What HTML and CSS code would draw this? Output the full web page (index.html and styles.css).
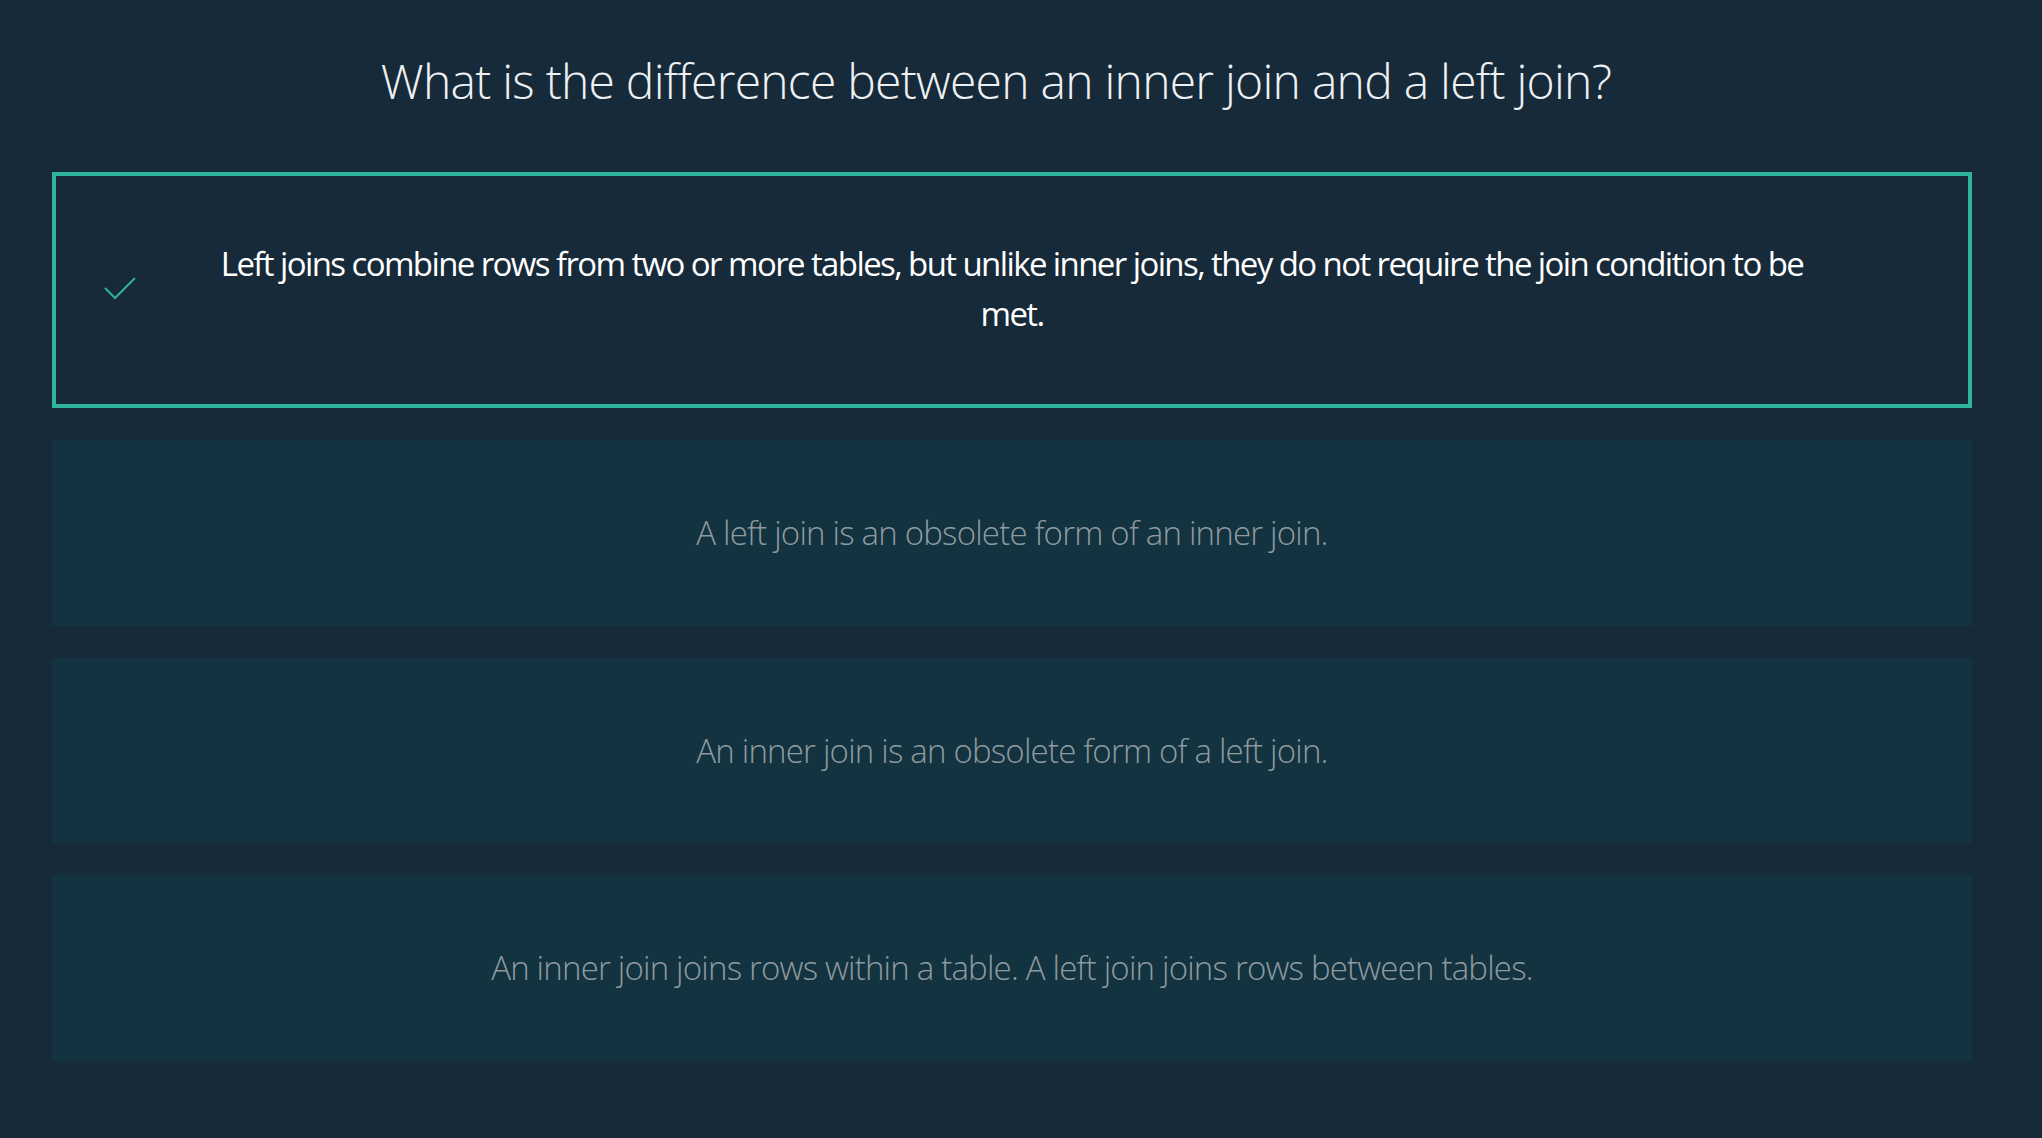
FILE: index.html
```html
<!DOCTYPE html>
<html lang="en">
<head>
<meta charset="utf-8">
<title>Quiz question</title>
<link rel="stylesheet" href="styles.css">
</head>
<body>
<main class="quiz">
  <h1 class="question">What is the difference between an inner join and a left join?</h1>
  <ul class="answers">
    <li class="answer answer--correct">
      <svg class="check" width="34" height="24" viewBox="0 0 34 24" aria-hidden="true"><polyline points="2,12 12,22 32,2" fill="none" stroke="#2fb39b" stroke-width="2"/></svg>
      <span class="answer-text">Left joins combine rows from two or more tables, but unlike inner joins, they do not require the join condition to be met.</span>
    </li>
    <li class="answer"><span class="answer-text">A left join is an obsolete form of an inner join.</span></li>
    <li class="answer"><span class="answer-text">An inner join is an obsolete form of a left join.</span></li>
    <li class="answer"><span class="answer-text">An inner join joins rows within a table. A left join joins rows between tables.</span></li>
  </ul>
</main>
</body>
</html>
```
FILE: styles.css
```css
html, body {
  margin: 0;
  padding: 0;
}
body {
  background: #172a3a;
  font-family: "Open Sans", "Noto Sans", sans-serif;
  min-height: 1138px;
}
.quiz {
  width: 1920px;
  padding: 52px 0 0 52px;
}
.question {
  margin: 0 0 62px;
  padding-right: 32px;
  font-size: 48px;
  line-height: 58px;
  font-weight: 300;
  color: #eef1f3;
  text-align: center;
  letter-spacing: -0.75px;
}
.answers {
  list-style: none;
  margin: 0;
  padding: 0;
  display: flex;
  flex-direction: column;
  gap: 32px;
}
.answer {
  position: relative;
  background: #12333f;
  padding: 68px 150px 68px;
  text-align: center;
  font-size: 33px;
  line-height: 49.5px;
  font-weight: 300;
  color: #8f9aa0;
  letter-spacing: -0.8px;
}
.answer--correct {
  background: transparent;
  border: 4px solid #2fb39b;
  padding: 63px 146px 66px;
  color: #ffffff;
  font-weight: 400;
  letter-spacing: -1.6px;
}
.check {
  position: absolute;
  left: 47px;
  top: 50%;
  margin-top: -14px;
}
```
